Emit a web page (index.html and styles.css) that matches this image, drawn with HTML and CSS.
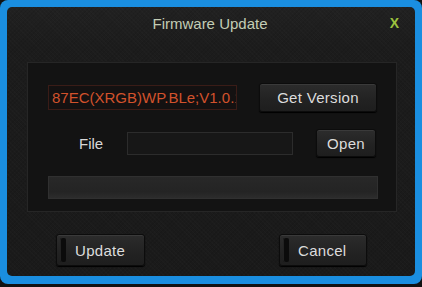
FILE: index.html
```html
<!DOCTYPE html>
<html lang="en">
<head>
  <meta charset="UTF-8" />
  <title>Firmware Update</title>
  <link rel="stylesheet" href="styles.css">
</head>
<body>
  <div class="frame">
    <div class="panel">
      <div class="title-bar">
        <span class="title">Firmware Update</span>
        <span class="close">X</span>
      </div>

      <div class="box">
        <div class="row row-version">
          <div class="version-field">87EC(XRGB)WP.BLe;V1.0.1</div>
          <button class="btn btn-get">Get Version</button>
        </div>
        <div class="row row-file">
          <span class="file-label">File</span>
          <div class="file-input"></div>
          <button class="btn btn-open">Open</button>
        </div>
        <div class="progress"></div>
      </div>

      <div class="actions">
        <button class="btn btn-main btn-update"><span class="led"></span>Update</button>
        <button class="btn btn-main btn-cancel"><span class="led"></span>Cancel</button>
      </div>
    </div>
  </div>
</body>
</html>
```

FILE: styles.css
```css
* {
  box-sizing: border-box;
}
body {
  margin: 0;
  background: #121212;
  font-family: 'Liberation Sans', Arial, sans-serif;
}
.frame {
  width: 422px;
  height: 284px;
  padding: 7px;
  background: #1a8ee0;
  border-radius: 8px;
}
.panel {
  width: 408px;
  height: 269px;
  background:
    repeating-linear-gradient(45deg, rgba(255,255,255,0.012) 0 1px, transparent 1px 3px),
    repeating-linear-gradient(-45deg, rgba(0,0,0,0.08) 0 1px, transparent 1px 3px),
    linear-gradient(180deg, #212121 0, #1c1c1c 40px, #1a1a1a 100%);
  border-radius: 5px;
  display: flex;
  flex-direction: column;
}
.title-bar {
  position: relative;
  height: 33px;
  line-height: 33px;
  text-align: center;
}
.title {
  font-size: 15px;
  color: #c3cdb5;
  margin-left: -2px;
}
.close {
  position: absolute;
  right: 16px;
  top: 0;
  font-size: 14px;
  font-weight: bold;
  color: #9cc23e;
}
.box {
  margin: 22px 0 0 20px;
  width: 370px;
  height: 150px;
  background: #131313;
  border: 1px solid #262626;
  padding: 20px 0 0 20px;
}
.row {
  display: flex;
  align-items: center;
}
.row-version {
  height: 29px;
}
.version-field {
  width: 189px;
  height: 25px;
  line-height: 23px;
  padding-left: 3px;
  background: #141111;
  border: 1px solid #3a1c17;
  color: #d2522c;
  font-size: 15px;
  white-space: nowrap;
  overflow: hidden;
}
.btn {
  font-family: inherit;
  font-size: 15px;
  letter-spacing: 0.3px;
  color: #dcdcdc;
  background: linear-gradient(180deg, #2c2c2c, #222 60%, #1e1e1e);
  border: 1px solid #0c0c0c;
  border-radius: 3px;
  box-shadow: inset 0 1px 0 #3a3a3a, 0 1px 1px #000;
  padding: 0;
}
.btn-get {
  margin-left: 22px;
  width: 118px;
  height: 29px;
}
.row-file {
  margin-top: 17px;
  height: 28px;
}
.file-label {
  width: 48px;
  margin-left: 31px;
  font-size: 15px;
  color: #d8d8d8;
}
.file-input {
  width: 166px;
  height: 23px;
  background: #171717;
  border: 1px solid #2c2c2c;
}
.btn-open {
  margin-left: 23px;
  width: 60px;
  height: 28px;
}
.progress {
  margin-top: 19px;
  width: 330px;
  height: 23px;
  background: linear-gradient(180deg, #282828, #242424 70%, #2c2c2c);
  border: 1px solid #303030;
}
.actions {
  display: flex;
  margin-top: 22px;
}
.btn-main {
  position: relative;
  height: 32px;
  text-align: left;
}
.btn-update {
  margin-left: 49px;
  width: 89px;
  padding-left: 18px;
}
.btn-cancel {
  margin-left: 134px;
  width: 88px;
  padding-left: 18px;
}
.led {
  position: absolute;
  left: 3px;
  top: 3px;
  width: 6px;
  height: 24px;
  border-radius: 2px;
  background: #0b0b0b;
  box-shadow: inset 1px 0 0 #222;
}
```
